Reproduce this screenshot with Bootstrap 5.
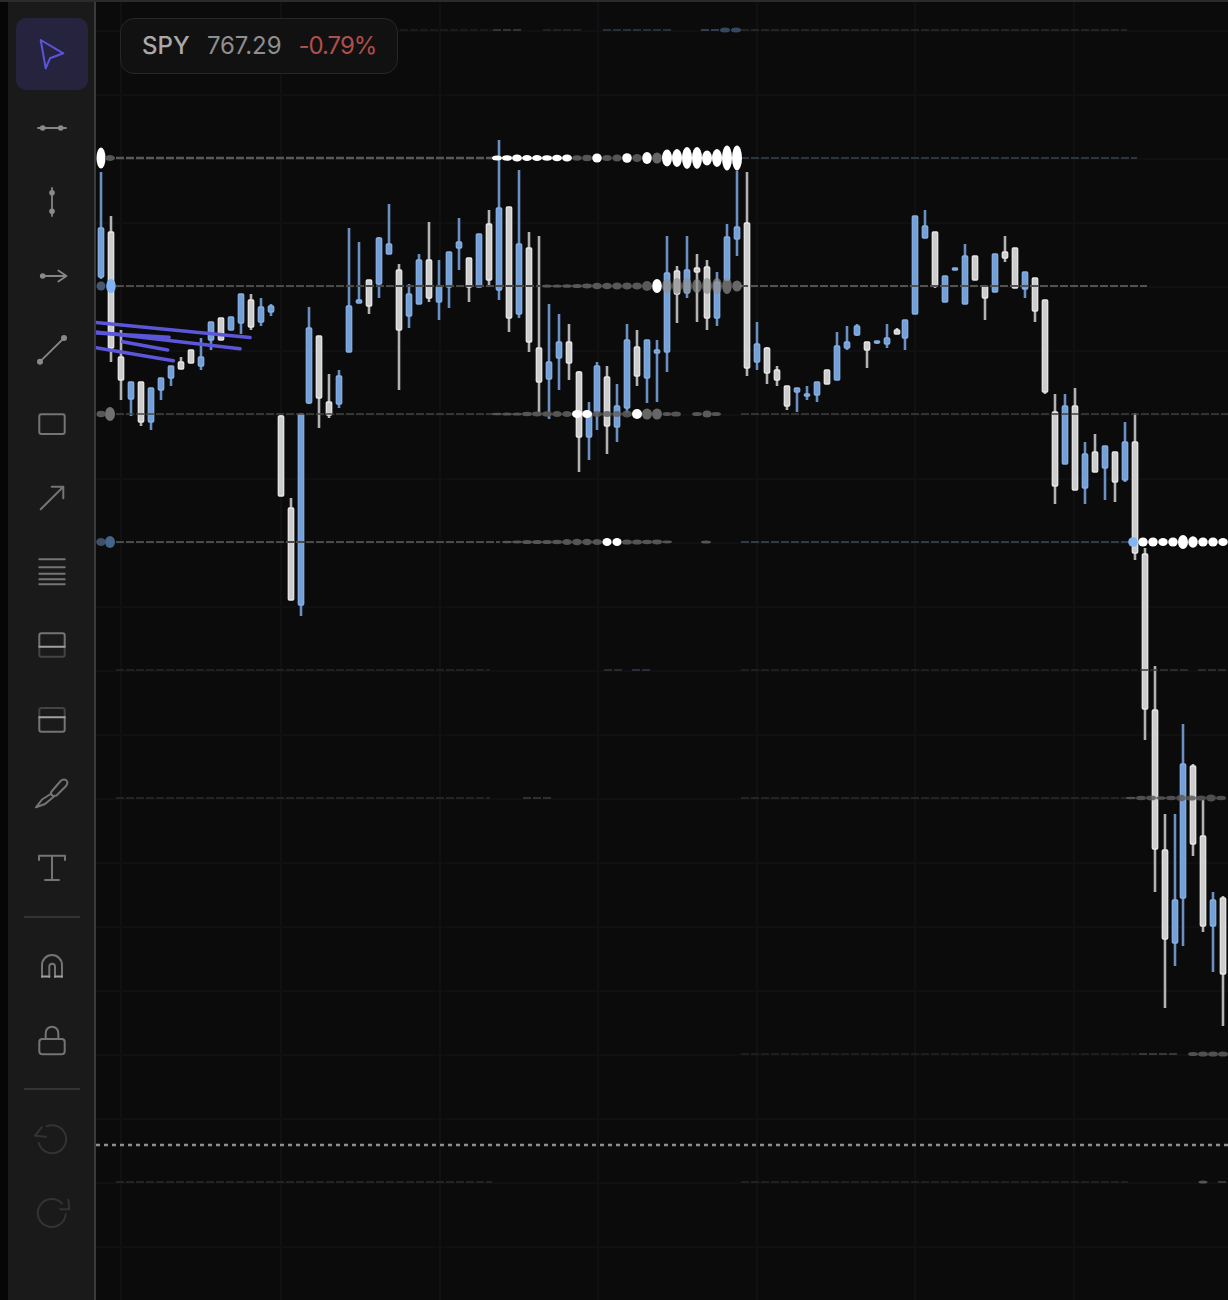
<!DOCTYPE html>
<html lang="en">
<head>
<meta charset="utf-8">
<title>SPY chart</title>
<link href="https://cdn.jsdelivr.net/npm/bootstrap@5.3.0/dist/css/bootstrap.min.css" rel="stylesheet">
<script src="https://cdn.jsdelivr.net/npm/bootstrap@5.3.0/dist/js/bootstrap.bundle.min.js"></script>
<style>
html,body{height:100%;margin:0;background:#060606;font-family:Inter,"Liberation Sans",sans-serif}
.shell{height:1300px;width:1228px;border-top:2px solid #2b2b2b;overflow:hidden;background:#060606;padding-left:8px}
.toolbar{width:88px;flex:0 0 88px;background:#1a1a1a;border-right:2px solid #3a3a3a;padding:16px 6px 0 8px;gap:2px}
.tool{width:72px;height:72px;padding:0;border:0;border-radius:10px;flex:0 0 72px;background:transparent}
.tool.active,.tool.active:hover{background:#26233f}
.tool svg{width:32px;height:32px;overflow:visible;fill:none;stroke:#747474;stroke-width:2;stroke-linecap:round;stroke-linejoin:round;filter:blur(.3px)}
.tool svg .dot{fill:#8a8a8a;stroke:none}
.tool svg .thin{stroke-width:1.8;stroke:#858585}
.tool svg .hi{stroke:#a0a0a0}
.tool svg .lo{stroke:#444}
.tool.active svg{stroke:#5b55dc}
.tool.off svg{stroke:#333}
.sep{height:2px;width:56px;margin:10px 0 11px 8px;background:#333;flex:0 0 2px}
.sep.second{margin:9px 0 12px 8px}
.chart{flex:1 1 auto;min-width:0;background:#0b0b0c}
.chart svg{display:block;width:100%;height:100%;filter:blur(.3px)}
.quote{top:16px;left:24px;width:278px;height:56px;background:#111112;border:1px solid #272727;border-radius:14px;padding-left:21px;gap:17px;font-size:24px;line-height:1;white-space:nowrap}
.sym{color:#a9a9a9;font-weight:500;letter-spacing:.1px}
.px{color:#8e8e8e;letter-spacing:-.1px}
.chg{color:#ad4f4d;letter-spacing:-1px}
</style>
</head>
<body>
<div class="shell d-flex">
  <nav class="toolbar d-flex flex-column align-items-start">
    <button class="btn tool active d-flex align-items-center justify-content-center" aria-label="Select"><svg viewBox="0 0 32 32"><path d="M4.7 2 27.3 15.3 14 20.3 9.7 30.3Z"/></svg></button>
    <button class="btn tool d-flex align-items-center justify-content-center" aria-label="Horizontal line"><svg viewBox="0 0 32 32"><path class="thin" d="M2 16H30"/><circle class="dot" cx="6.7" cy="16" r="2.8"/><circle class="dot" cx="24.7" cy="16" r="2.8"/></svg></button>
    <button class="btn tool d-flex align-items-center justify-content-center" aria-label="Vertical line"><svg viewBox="0 0 32 32"><path class="thin" d="M16 2V30"/><circle class="dot" cx="16" cy="6.7" r="2.8"/><circle class="dot" cx="16" cy="25.3" r="2.8"/></svg></button>
    <button class="btn tool d-flex align-items-center justify-content-center" aria-label="Ray"><svg viewBox="0 0 32 32"><path class="thin" d="M7 16H30.5M22.3 10.5 30.5 16 22.3 21.5"/><circle class="dot" cx="6.7" cy="16" r="2.8"/></svg></button>
    <button class="btn tool d-flex align-items-center justify-content-center" aria-label="Trend line"><svg viewBox="0 0 32 32"><path class="thin" d="M4 27.7 28 4"/><circle class="dot" cx="4" cy="27.7" r="3"/><circle class="dot" cx="28" cy="4" r="3"/></svg></button>
    <button class="btn tool d-flex align-items-center justify-content-center" aria-label="Rectangle"><svg viewBox="0 0 32 32"><rect x="3.3" y="6.3" width="25.4" height="19.7" rx="2"/></svg></button>
    <button class="btn tool d-flex align-items-center justify-content-center" aria-label="Arrow"><svg viewBox="0 0 32 32"><path d="M4.7 27.3 27.3 4.7M15.7 4.7H27.3V16.3"/></svg></button>
    <button class="btn tool d-flex align-items-center justify-content-center" aria-label="Fibonacci"><svg viewBox="0 0 32 32"><path d="M3.3 3.3H28.7M3.3 11.3H28.7M3.3 17.7H28.7M3.3 23.3H28.7M3.3 28.3H28.7"/></svg></button>
    <button class="btn tool d-flex align-items-center justify-content-center" aria-label="Long position"><svg viewBox="0 0 32 32"><path d="M3.3 16.7V5.3Q3.3 3.3 5.3 3.3H26.7Q28.7 3.3 28.7 5.3V16.7"/><path class="lo" d="M3.3 16.7V24.7Q3.3 26.7 5.3 26.7H26.7Q28.7 26.7 28.7 24.7V16.7"/><path class="hi" d="M3.3 16.7H28.7"/></svg></button>
    <button class="btn tool d-flex align-items-center justify-content-center" aria-label="Short position"><svg viewBox="0 0 32 32"><path class="lo" d="M3.3 13.3V6Q3.3 4 5.3 4H26.7Q28.7 4 28.7 6V13.3"/><path d="M3.3 13.3V25.7Q3.3 27.7 5.3 27.7H26.7Q28.7 27.7 28.7 25.7V13.3"/><path class="hi" d="M3.3 13.3H28.7"/></svg></button>
    <button class="btn tool d-flex align-items-center justify-content-center" aria-label="Brush"><svg viewBox="0 0 32 32"><path d="M16 13 24.6 3Q27.5.4 30.5 2.5 32.5 5 30 8L20.5 17.5Q17 18.5 15.5 17 14 15 16 13Z"/><path d="M15.5 15.5 6 21.5 0 29.3 9 26 18 18.5"/></svg></button>
    <button class="btn tool d-flex align-items-center justify-content-center" aria-label="Text"><svg viewBox="0 0 32 32"><path d="M3 8V3.7H29V8M16 3.7V28M9 28H23"/></svg></button>
    <div class="sep"></div>
    <button class="btn tool d-flex align-items-center justify-content-center" aria-label="Magnet"><svg viewBox="0 0 32 32"><path d="M6 26V14A10 10 0 0 1 26 14V26M13.3 26V15.5A2.85 2.85 0 0 1 19 15.5V26"/><path class="hi" d="M6 25.6H13.3M19 25.6H26"/></svg></button>
    <button class="btn tool d-flex align-items-center justify-content-center" aria-label="Lock"><svg viewBox="0 0 32 32"><rect x="3.3" y="14" width="25.4" height="15.3" rx="3"/><path d="M9.7 14V8A6.3 6.3 0 0 1 22.3 8V14"/></svg></button>
    <div class="sep second"></div>
    <button class="btn tool off d-flex align-items-center justify-content-center" aria-label="Undo"><svg viewBox="0 0 32 32"><path d="M10.7 2.3A14 14 0 1 1 2.7 19M5.7 3.3-1 11.7 10 12.7"/></svg></button>
    <button class="btn tool off d-flex align-items-center justify-content-center" aria-label="Redo"><svg viewBox="0 0 32 32"><path d="M26 5.5A14 14 0 1 0 29.7 16M32.3 1.7 33.3 11.3H24"/></svg></button>
  </nav>
  <main class="chart position-relative">
    <svg id="plot" viewBox="0 0 1132 1298" preserveAspectRatio="none" xmlns="http://www.w3.org/2000/svg"></svg>
    <div class="quote position-absolute d-flex align-items-center">
      <span class="sym">SPY</span><span class="px">767.29</span><span class="chg">-0.79%</span>
    </div>
  </main>
</div>
<script>
var C=[[101,'b',172,228,277,279],[111,'w',216,232,348,362],[121,'w',330,357,380,400],[131,'b',382,382,399,416],[141,'w',382,382,422,426],[151,'b',388,388,422,430],[161,'b',378,378,390,400],[171,'b',366,366,378,386],[181,'w',357,362,369,369],[191,'w',350,350,363,363],[201,'b',338,357,366,370],[211,'b',322,322,340,350],[221,'w',318,318,340,340],[231,'b',317,317,330,330],[241,'b',294,294,323,334],[251,'w',294,300,327,330],[261,'b',298,307,322,326],[271,'b',304,306,312,316],
[281,'w',415,416,496,496],[291,'w',498,508,600,600],[301,'b',414,414,605,616],[309,'b',307,328,403,404],[319,'w',336,336,398,428],[329,'w',374,402,415,418],[339,'b',370,376,404,408],[349,'b',228,306,352,352],[359,'b',242,300,303,303],[369,'w',280,280,306,314],[379,'b',237,238,284,298],[389,'b',204,244,254,254],[399,'w',264,270,330,390],[409,'b',284,294,316,328],[419,'b',254,260,304,304],[429,'w',222,260,298,302],[439,'b',260,286,302,320],[449,'b',252,252,287,308],[459,'b',218,242,248,270],[469,'w',258,258,287,302],[479,'b',234,234,287,287],[489,'w',210,224,280,287],[499,'b',140,208,290,300],[509,'w',207,207,318,332],[519,'b',170,244,314,318],[529,'w',232,248,342,352],[539,'w',236,348,382,416],[549,'b',304,362,379,419],[559,'b',314,342,358,390],[569,'w',324,342,363,380],[579,'w',371,372,437,472],[589,'b',402,413,437,460],[597,'b',362,366,412,430],[607,'w',366,377,426,454],[617,'b',384,406,427,442],[627,'b',324,340,408,413],[637,'w',330,347,376,386],[647,'b',340,340,378,403],[657,'b',340,350,353,402],[667,'b',236,273,352,372],[677,'w',266,271,294,323],[687,'b',236,270,293,298],[697,'w',254,268,272,322],[707,'w',260,267,318,330],[717,'b',272,282,318,326],[727,'b',224,237,280,280],[737,'b',171,227,239,256],[747,'w',172,223,368,376],[757,'b',322,344,362,370],[767,'w',347,348,373,384],[777,'w',366,370,380,386],[787,'w',386,386,406,410],[797,'b',388,388,392,412],[807,'b',386,394,396,400],[817,'b',382,382,395,402],[827,'w',370,370,384,384],[837,'b',332,346,380,380],[847,'b',326,342,348,350],[857,'b',324,326,335,336],[867,'w',342,342,350,368],[877,'b',341,341,342,344],[887,'b',324,338,344,348],[897,'w',328,330,334,334],[905,'b',320,320,338,350],[915,'b',216,216,314,314],[925,'b',210,226,238,238],[935,'w',232,232,286,288],[945,'b',276,276,302,302],[955,'b',268,268,270,270],[965,'b',244,256,304,304],[975,'w',256,256,280,280],[985,'w',286,286,298,320],[995,'b',254,254,292,292],[1005,'w',236,252,258,262],[1015,'w',248,248,288,288],[1025,'b',272,272,289,298],[1035,'w',278,278,311,322],[1045,'w',300,300,392,394],[1055,'w',394,412,486,504],[1065,'b',394,406,464,464],[1075,'w',388,406,490,490],[1085,'b',442,454,488,504],[1095,'w',434,452,472,472],[1105,'b',446,446,468,500],[1115,'w',452,452,482,502],[1125,'b',422,442,480,482],[1135,'w',413,442,553,560],[1145,'w',548,554,709,740],[1155,'w',666,710,849,892],[1165,'w',814,850,939,1008],[1175,'b',814,900,943,966],[1183,'b',724,764,898,946],[1193,'w',764,766,844,856],[1203,'w',800,836,926,932],[1213,'b',892,900,926,972],[1223,'w',896,898,974,1026]];
var X0=96,Y0=2,out=[];
function ln(a,b,c,d,s,w,extra){out.push('<line x1="'+(a-X0)+'" y1="'+(b-Y0)+'" x2="'+(c-X0)+'" y2="'+(d-Y0)+'" stroke="'+s+'" stroke-width="'+w+'"'+(extra||'')+'/>');}
function el(x,y,rx,ry,f,o){out.push('<ellipse cx="'+(x-X0)+'" cy="'+(y-Y0)+'" rx="'+rx+'" ry="'+ry+'" fill="'+f+'"'+(o?' opacity="'+o+'"':'')+'/>');}
// grid
[121,281,440,598,757,915,1074].forEach(function(x){ln(x,0,x,1300,'#151516',1.5);});
for(var y=31;y<1300;y+=64)ln(96,y,1228,y,'#131314',1.5);
// candles
C.forEach(function(c){var x=c[0],bl=c[1]=='b';
 ln(x,c[2],x,c[5],bl?'#6a90c2':'#b2b2b2',2.6);
 var h=Math.max(c[4]-c[3],2);
 out.push('<rect x="'+(x-2.7-X0)+'" y="'+(c[3]-Y0)+'" width="5.4" height="'+h+'" rx="1" fill="'+(bl?'#74a0d8':'#cdcdcd')+'" stroke="'+(bl?'#86aee2':'#e6e6e6')+'" stroke-width="1.3"/>');
});
function dash(a,b,y,col,w){ln(a,y,b,y,col,w||1.6,' stroke-dasharray="8 2"');}
// level 30
dash(400,492,30,'#202020',1.6);dash(493,523,30,'#333',1.8);dash(543,582,30,'#2a2a2a',1.6);dash(603,672,30,'#26303c',1.8);dash(701,741,30,'#2f3e52',2.2);dash(741,1127,30,'#2e2e2e',1.6);
el(725,30,5,2.5,'#34485f');el(736,30,5,2.5,'#34485f');
// level 158
dash(116,497,158,'#585858',2.6);dash(741,1137,158,'#2c3540',1.8);
el(101,158,4.5,10.5,'#fff');el(110,158,5,3,'#555');
[[497,2.5],[507,2.8],[517,3.5],[527,3],[537,3],[547,2.8],[557,3.2],[567,3.5]].forEach(function(d){el(d[0],158,5,d[1],'#fff');});
[[577,2.8,'#555'],[587,3.2,'#555'],[597,4.5,'#fff'],[607,3,'#555'],[617,3.5,'#555'],[627,4.8,'#fff'],[637,4,'#555'],[647,6,'#fff'],[657,5.5,'#666'],[667,8.5,'#fff'],[677,9,'#fff'],[687,11,'#fff'],[697,11,'#fff'],[707,7.5,'#fff'],[717,9,'#fff'],[727,12.5,'#fff'],[737,12.5,'#fff']].forEach(function(d){el(d[0],158,d[0]>660?5:4.8,d[1],d[2]);});
// level 286
dash(116,540,286,'#4a4a4a',1.8);dash(740,1147,286,'#525252',1.8);
el(101,286,4.5,4.5,'#45586f');el(111,286,4.8,7,'#7fb4f5');
[[547,1.5],[557,1.6],[567,1.8],[577,2],[587,2.4],[597,3.2],[607,3.2],[617,3.5],[627,3.5],[637,3.5],[647,5]].forEach(function(d){el(d[0],286,5,d[1],'#585858');});
el(657,286,4.8,7,'#fff');
[[667,7],[677,8],[687,8],[697,7],[707,8],[717,8],[727,8],[737,5.5]].forEach(function(d){el(d[0],286,4.8,d[1],'#8e8e8e',0.7);});
// level 414
dash(116,500,414,'#444',1.6);dash(741,1228,414,'#3f3f3f',1.7);
el(101,414,4.5,3.2,'#585858');el(110,414,5,7,'#707070');
[[497,1.2],[507,1.6],[517,1.6],[527,2.2],[537,2.4],[547,2.8],[557,3],[567,3]].forEach(function(d){el(d[0],414,5,d[1],'#555');});
el(577,414,5,4,'#fff');el(587,414,5,4,'#fff');
[[597,3],[607,3],[617,3],[627,3.5]].forEach(function(d){el(d[0],414,5,d[1],'#5f5f5f',0.85);});
el(637,414,5,5,'#fff');el(647,414,5,5.5,'#666');el(657,414,5,5.5,'#666');el(667,414,4.5,2,'#555');el(676,414,5,2.6,'#555');el(697,414,5,2,'#555');el(707,414,4.5,3.5,'#5a5a5a');el(716,414,5,2,'#555');
// level 542
dash(116,500,542,'#4a4a4a',1.8);dash(741,1130,542,'#313c4b',1.8);
el(101,542,4.8,4,'#3d5068');el(110,542,5,6,'#45648c');
[[507,1.2],[517,1.4],[527,2],[537,2],[547,2],[557,2.2],[567,3],[577,3.2],[587,3.2],[597,3]].forEach(function(d){el(d[0],542,5,d[1],'#555');});
el(607,542,4.6,4,'#fff');el(617,542,4.6,4,'#fff');
[[627,2.6],[637,2.6],[647,2.2],[657,2.4],[667,1.4]].forEach(function(d){el(d[0],542,5,d[1],'#555');});
el(706,542,5,1.5,'#555');
el(1133,542,4.8,4.8,'#82b6f2');
[[1143,4.5],[1153,4.5],[1163,4],[1173,4.5],[1183,7],[1193,5.8],[1203,4.5],[1213,4.5],[1223,4]].forEach(function(d){el(d[0],542,d[0]==1183?5:4.8,d[1],'#fff');});
// faint levels
dash(116,490,670,'#282828',1.4);dash(604,622,670,'#363636',1.6);dash(632,651,670,'#303c4c',1.6);dash(741,1137,670,'#262626',1.4);dash(1140,1188,670,'#363636',1.6);dash(1198,1228,670,'#363636',1.6);
dash(116,490,798,'#2c2c2c',1.4);dash(523,551,798,'#3c3c3c',1.6);dash(741,1130,798,'#2e2e2e',1.4);
[[1131,1.2],[1141,2.2],[1151,2.4],[1161,1.8],[1171,2.2],[1181,3.2],[1191,2.6],[1201,2.6],[1211,3.4],[1221,2.2]].forEach(function(d){el(d[0],798,5,d[1],'#5a5a5a',0.85);});
dash(741,1137,1054,'#252525',1.4);dash(1139,1177,1054,'#454545',1.6);
[[1193,2],[1203,2.6],[1213,2.6],[1223,2.6]].forEach(function(d){el(d[0],1054,5,d[1],'#505050');});
dash(116,492,1182,'#2c2c2c',1.4);dash(741,1128,1182,'#282828',1.4);el(1203,1182,4.5,1.6,'#555');dash(1218,1228,1182,'#444',1.6);
// dotted price line
ln(96,1145,1228,1145,'#8f8f8f',2.4,' stroke-dasharray="4 4"');
// drawn lines
[[96,322.5,250,337.5],[96,332,240,348.7],[96,333,169,337.3],[122.7,341.7,167.7,350],[96,347.7,173.3,360.7]].forEach(function(l){ln(l[0],l[1],l[2],l[3],'#5c56da',3.6,' stroke-linecap="round"');});
document.getElementById('plot').innerHTML=out.join('');
</script>
</body>
</html>
